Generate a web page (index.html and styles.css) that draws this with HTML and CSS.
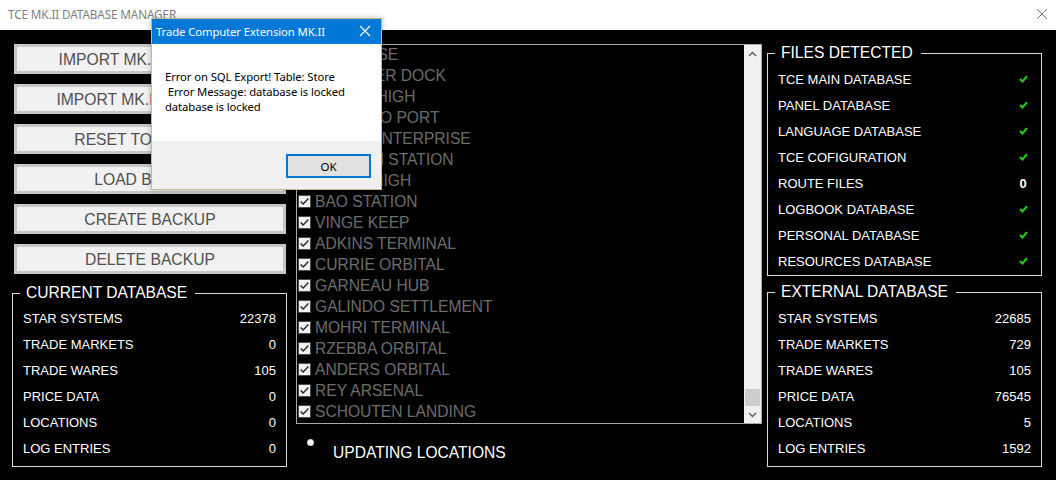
FILE: index.html
```html
<!DOCTYPE html>
<html lang="en">
<head>
<meta charset="utf-8">
<title>TCE MK.II DATABASE MANAGER</title>
<link rel="stylesheet" href="styles.css">
</head>
<body>
<div class="window">
  <header class="titlebar">
    <span class="title">TCE MK.II DATABASE MANAGER</span>
    <svg class="win-close" width="12" height="12" viewBox="0 0 12 12"><path d="M1 1L11 11M11 1L1 11" stroke="#6f6f6f" stroke-width="1" fill="none"/></svg>
  </header>
  <main class="main">
    <section class="col-left">
      <div class="buttons">
        <button class="btn">IMPORT MK.I DATABASE</button>
        <button class="btn">IMPORT MK.II DATABASE</button>
        <button class="btn">RESET TO DEFAULT</button>
        <button class="btn">LOAD BACKUP</button>
        <button class="btn">CREATE BACKUP</button>
        <button class="btn">DELETE BACKUP</button>
      </div>
      <fieldset class="group group-db group-current">
        <legend>CURRENT DATABASE</legend>
        <div class="row"><span>STAR SYSTEMS</span><span>22378</span></div>
        <div class="row"><span>TRADE MARKETS</span><span>0</span></div>
        <div class="row"><span>TRADE WARES</span><span>105</span></div>
        <div class="row"><span>PRICE DATA</span><span>0</span></div>
        <div class="row"><span>LOCATIONS</span><span>0</span></div>
        <div class="row"><span>LOG ENTRIES</span><span>0</span></div>
      </fieldset>
    </section>

    <section class="col-mid">
      <div class="listbox">
        <ul class="list">
          <li><svg class="cb" viewBox="0 0 13 13"><rect x="0.5" y="0.5" width="12" height="12" fill="#f2f2f2" stroke="#4a4a4a"/><path d="M2.6 6.4L5.2 9L10.4 3.6" stroke="#262626" stroke-width="1.4" fill="none"/></svg>KIDD BASE</li>
          <li><svg class="cb" viewBox="0 0 13 13"><rect x="0.5" y="0.5" width="12" height="12" fill="#f2f2f2" stroke="#4a4a4a"/><path d="M2.6 6.4L5.2 9L10.4 3.6" stroke="#262626" stroke-width="1.4" fill="none"/></svg>DRUMMER DOCK</li>
          <li><svg class="cb" viewBox="0 0 13 13"><rect x="0.5" y="0.5" width="12" height="12" fill="#f2f2f2" stroke="#4a4a4a"/><path d="M2.6 6.4L5.2 9L10.4 3.6" stroke="#262626" stroke-width="1.4" fill="none"/></svg>MASON HIGH</li>
          <li><svg class="cb" viewBox="0 0 13 13"><rect x="0.5" y="0.5" width="12" height="12" fill="#f2f2f2" stroke="#4a4a4a"/><path d="M2.6 6.4L5.2 9L10.4 3.6" stroke="#262626" stroke-width="1.4" fill="none"/></svg>ORLANDO PORT</li>
          <li><svg class="cb" viewBox="0 0 13 13"><rect x="0.5" y="0.5" width="12" height="12" fill="#f2f2f2" stroke="#4a4a4a"/><path d="M2.6 6.4L5.2 9L10.4 3.6" stroke="#262626" stroke-width="1.4" fill="none"/></svg>BRAVE ENTERPRISE</li>
          <li><svg class="cb" viewBox="0 0 13 13"><rect x="0.5" y="0.5" width="12" height="12" fill="#f2f2f2" stroke="#4a4a4a"/><path d="M2.6 6.4L5.2 9L10.4 3.6" stroke="#262626" stroke-width="1.4" fill="none"/></svg>NEWTON STATION</li>
          <li><svg class="cb" viewBox="0 0 13 13"><rect x="0.5" y="0.5" width="12" height="12" fill="#f2f2f2" stroke="#4a4a4a"/><path d="M2.6 6.4L5.2 9L10.4 3.6" stroke="#262626" stroke-width="1.4" fill="none"/></svg>DOYLE HIGH</li>
          <li><svg class="cb" viewBox="0 0 13 13"><rect x="0.5" y="0.5" width="12" height="12" fill="#f2f2f2" stroke="#4a4a4a"/><path d="M2.6 6.4L5.2 9L10.4 3.6" stroke="#262626" stroke-width="1.4" fill="none"/></svg>BAO STATION</li>
          <li><svg class="cb" viewBox="0 0 13 13"><rect x="0.5" y="0.5" width="12" height="12" fill="#f2f2f2" stroke="#4a4a4a"/><path d="M2.6 6.4L5.2 9L10.4 3.6" stroke="#262626" stroke-width="1.4" fill="none"/></svg>VINGE KEEP</li>
          <li><svg class="cb" viewBox="0 0 13 13"><rect x="0.5" y="0.5" width="12" height="12" fill="#f2f2f2" stroke="#4a4a4a"/><path d="M2.6 6.4L5.2 9L10.4 3.6" stroke="#262626" stroke-width="1.4" fill="none"/></svg>ADKINS TERMINAL</li>
          <li><svg class="cb" viewBox="0 0 13 13"><rect x="0.5" y="0.5" width="12" height="12" fill="#f2f2f2" stroke="#4a4a4a"/><path d="M2.6 6.4L5.2 9L10.4 3.6" stroke="#262626" stroke-width="1.4" fill="none"/></svg>CURRIE ORBITAL</li>
          <li><svg class="cb" viewBox="0 0 13 13"><rect x="0.5" y="0.5" width="12" height="12" fill="#f2f2f2" stroke="#4a4a4a"/><path d="M2.6 6.4L5.2 9L10.4 3.6" stroke="#262626" stroke-width="1.4" fill="none"/></svg>GARNEAU HUB</li>
          <li><svg class="cb" viewBox="0 0 13 13"><rect x="0.5" y="0.5" width="12" height="12" fill="#f2f2f2" stroke="#4a4a4a"/><path d="M2.6 6.4L5.2 9L10.4 3.6" stroke="#262626" stroke-width="1.4" fill="none"/></svg>GALINDO SETTLEMENT</li>
          <li><svg class="cb" viewBox="0 0 13 13"><rect x="0.5" y="0.5" width="12" height="12" fill="#f2f2f2" stroke="#4a4a4a"/><path d="M2.6 6.4L5.2 9L10.4 3.6" stroke="#262626" stroke-width="1.4" fill="none"/></svg>MOHRI TERMINAL</li>
          <li><svg class="cb" viewBox="0 0 13 13"><rect x="0.5" y="0.5" width="12" height="12" fill="#f2f2f2" stroke="#4a4a4a"/><path d="M2.6 6.4L5.2 9L10.4 3.6" stroke="#262626" stroke-width="1.4" fill="none"/></svg>RZEBBA ORBITAL</li>
          <li><svg class="cb" viewBox="0 0 13 13"><rect x="0.5" y="0.5" width="12" height="12" fill="#f2f2f2" stroke="#4a4a4a"/><path d="M2.6 6.4L5.2 9L10.4 3.6" stroke="#262626" stroke-width="1.4" fill="none"/></svg>ANDERS ORBITAL</li>
          <li><svg class="cb" viewBox="0 0 13 13"><rect x="0.5" y="0.5" width="12" height="12" fill="#f2f2f2" stroke="#4a4a4a"/><path d="M2.6 6.4L5.2 9L10.4 3.6" stroke="#262626" stroke-width="1.4" fill="none"/></svg>REY ARSENAL</li>
          <li><svg class="cb" viewBox="0 0 13 13"><rect x="0.5" y="0.5" width="12" height="12" fill="#f2f2f2" stroke="#4a4a4a"/><path d="M2.6 6.4L5.2 9L10.4 3.6" stroke="#262626" stroke-width="1.4" fill="none"/></svg>SCHOUTEN LANDING</li>
        </ul>
        <div class="scrollbar">
          <div class="sb-arrow"><svg width="9" height="6" viewBox="0 0 9 6"><path d="M1 5L4.5 1.5L8 5" stroke="#606060" stroke-width="1.5" fill="none"/></svg></div>
          <div class="sb-track"><div class="sb-thumb"></div></div>
          <div class="sb-arrow"><svg width="9" height="6" viewBox="0 0 9 6"><path d="M1 1L4.5 4.5L8 1" stroke="#606060" stroke-width="1.5" fill="none"/></svg></div>
        </div>
      </div>
      <div class="status">
        <span class="dot"></span>
        <span class="status-text">UPDATING LOCATIONS</span>
      </div>
    </section>

    <section class="col-right">
      <fieldset class="group group-files">
        <legend>FILES DETECTED</legend>
        <div class="row"><span>TCE MAIN DATABASE</span><span class="mark"><svg width="9" height="8" viewBox="0 0 9 8"><path d="M1 4L3.5 6.5L8 1.2" stroke="#1fd01f" stroke-width="2" fill="none"/></svg></span></div>
        <div class="row"><span>PANEL DATABASE</span><span class="mark"><svg width="9" height="8" viewBox="0 0 9 8"><path d="M1 4L3.5 6.5L8 1.2" stroke="#1fd01f" stroke-width="2" fill="none"/></svg></span></div>
        <div class="row"><span>LANGUAGE DATABASE</span><span class="mark"><svg width="9" height="8" viewBox="0 0 9 8"><path d="M1 4L3.5 6.5L8 1.2" stroke="#1fd01f" stroke-width="2" fill="none"/></svg></span></div>
        <div class="row"><span>TCE COFIGURATION</span><span class="mark"><svg width="9" height="8" viewBox="0 0 9 8"><path d="M1 4L3.5 6.5L8 1.2" stroke="#1fd01f" stroke-width="2" fill="none"/></svg></span></div>
        <div class="row"><span>ROUTE FILES</span><span class="mark mark-num">0</span></div>
        <div class="row"><span>LOGBOOK DATABASE</span><span class="mark"><svg width="9" height="8" viewBox="0 0 9 8"><path d="M1 4L3.5 6.5L8 1.2" stroke="#1fd01f" stroke-width="2" fill="none"/></svg></span></div>
        <div class="row"><span>PERSONAL DATABASE</span><span class="mark"><svg width="9" height="8" viewBox="0 0 9 8"><path d="M1 4L3.5 6.5L8 1.2" stroke="#1fd01f" stroke-width="2" fill="none"/></svg></span></div>
        <div class="row"><span>RESOURCES DATABASE</span><span class="mark"><svg width="9" height="8" viewBox="0 0 9 8"><path d="M1 4L3.5 6.5L8 1.2" stroke="#1fd01f" stroke-width="2" fill="none"/></svg></span></div>
      </fieldset>
      <fieldset class="group group-db group-external">
        <legend>EXTERNAL DATABASE</legend>
        <div class="row"><span>STAR SYSTEMS</span><span>22685</span></div>
        <div class="row"><span>TRADE MARKETS</span><span>729</span></div>
        <div class="row"><span>TRADE WARES</span><span>105</span></div>
        <div class="row"><span>PRICE DATA</span><span>76545</span></div>
        <div class="row"><span>LOCATIONS</span><span>5</span></div>
        <div class="row"><span>LOG ENTRIES</span><span>1592</span></div>
      </fieldset>
    </section>
  </main>

  <div class="dialog">
    <div class="dlg-title">
      <span>Trade Computer Extension MK.II</span>
      <svg class="dlg-close" width="12" height="12" viewBox="0 0 12 12"><path d="M1 1L11 11M11 1L1 11" stroke="#ffffff" stroke-width="1.1" fill="none"/></svg>
    </div>
    <div class="dlg-body">
      <p>Error on SQL Export! Table: Store</p>
      <p>&nbsp;Error Message: database is locked</p>
      <p>database is locked</p>
    </div>
    <div class="dlg-footer">
      <button class="dlg-ok">OK</button>
    </div>
  </div>
</div>
</body>
</html>
```

FILE: styles.css
```css
* { box-sizing: border-box; }

html, body {
  margin: 0;
  padding: 0;
  background: #000;
}

.window {
  position: relative;
  width: 1056px;
  height: 480px;
  overflow: hidden;
  background: #000;
  font-family: "Liberation Sans", Arial, sans-serif;
}

/* ---------- title bar ---------- */
.titlebar {
  height: 30px;
  background: #fff;
  display: flex;
  align-items: center;
  justify-content: space-between;
  padding: 0 7px 2px 8px;
}
.title {
  font-family: "Noto Sans", "Open Sans", sans-serif;
  font-size: 11.7px;
  color: #808080;
  letter-spacing: -0.1px;
}
.win-close { display: block; margin-right: 1px; }

/* ---------- main layout ---------- */
.main {
  display: flex;
  align-items: flex-start;
  padding: 14px 0 0 12px;
}
.col-left {
  width: 275px;
  display: flex;
  flex-direction: column;
}
.col-mid {
  width: 466px;
  margin: 0 5px 0 9px;
  display: flex;
  flex-direction: column;
}
.col-right {
  width: 275px;
  display: flex;
  flex-direction: column;
}

/* ---------- buttons ---------- */
.buttons {
  display: flex;
  flex-direction: column;
  gap: 10px;
  padding-left: 2px;
}
.btn {
  width: 272px;
  height: 30px;
  margin: 0;
  padding: 1px 0 0 0;
  background: #f1f1f1;
  border: 3px solid #c6c6c6;
  font-family: "Liberation Sans", Arial, sans-serif;
  font-size: 15.7px;
  color: #505050;
  text-align: center;
  white-space: nowrap;
  overflow: hidden;
}

/* ---------- group boxes ---------- */
.group {
  margin: 0;
  border: 1px solid #dadada;
  padding: 3px 10px 5px 10px;
  min-width: 0;
  color: #fff;
}
.group legend {
  font-size: 15.6px;
  line-height: 18px;
  padding: 0 8px 0 6px;
  margin-left: -3px;
  color: #fff;
}
.row {
  height: 26px;
  display: flex;
  align-items: center;
  justify-content: space-between;
  font-size: 13px;
  color: #fff;
}
.group-current { margin-top: 10px; }
.group-files { padding: 4px 10px 1px 10px; }
.group-external { margin-top: 7px; padding-top: 4px; }

.mark {
  width: 16px;
  display: flex;
  justify-content: center;
  align-items: center;
}
.mark svg { display: block; }
.mark-num { font-weight: bold; }

/* ---------- list box ---------- */
.listbox {
  height: 380px;
  border: 1px solid #a9a9a9;
  display: flex;
  background: #000;
}
.list {
  flex: 1;
  list-style: none;
  margin: -1px 0 0 0;
  padding: 0 0 0 1px;
  overflow: hidden;
}
.list li {
  height: 21px;
  display: flex;
  align-items: center;
  gap: 4px;
  font-size: 15.6px;
  color: #6c6c6c;
  white-space: nowrap;
}
.cb {
  width: 13px;
  height: 13px;
  flex: none;
  display: block;
}

.scrollbar {
  width: 17px;
  background: #f0f0f0;
  display: flex;
  flex-direction: column;
}
.sb-arrow {
  height: 17px;
  display: flex;
  align-items: center;
  justify-content: center;
}
.sb-arrow svg { display: block; }
.sb-track {
  flex: 1;
  display: flex;
  flex-direction: column;
  justify-content: flex-end;
}
.sb-thumb {
  height: 17px;
  margin: 0 1px;
  background: #cdcdcd;
}

/* ---------- status ---------- */
.status {
  display: flex;
  align-items: flex-start;
  padding: 15px 0 0 11px;
}
.dot {
  width: 7px;
  height: 7px;
  border-radius: 50%;
  background: radial-gradient(circle, #ffffff 0 45%, #bdbdbd 70%, #555 100%);
}
.status-text {
  margin: 5px 0 0 19px;
  font-size: 15.6px;
  line-height: 18px;
  color: #fff;
}

/* ---------- dialog ---------- */
.dialog {
  position: absolute;
  left: 151px;
  top: 18px;
  width: 231px;
  height: 172px;
  border: 1px solid #c9b890;
  background: #fff;
  display: flex;
  flex-direction: column;
  font-family: "Noto Sans", "Open Sans", sans-serif;
  box-shadow: 0 0 6px rgba(0,0,0,0.25);
}
.dlg-title {
  height: 25px;
  background: #0078d7;
  color: #fff;
  display: flex;
  align-items: center;
  justify-content: space-between;
  padding: 0 10px 1px 4px;
  font-size: 11.3px;
  letter-spacing: -0.1px;
}
.dlg-close { display: block; }
.dlg-body {
  height: 97px;
  padding: 25px 0 0 13px;
  background: #fff;
  font-size: 11.3px;
  letter-spacing: -0.1px;
  line-height: 15px;
  color: #000;
}
.dlg-body p { margin: 0; white-space: pre; }
.dlg-footer {
  flex: 1;
  background: #f0f0f0;
  display: flex;
  justify-content: flex-end;
  align-items: flex-start;
  padding: 13px 10px 0 0;
}
.dlg-ok {
  width: 85px;
  height: 24px;
  margin: 0;
  padding: 0;
  border: 2px solid #0078d7;
  background: #e1e1e1;
  font-family: "Noto Sans", "Open Sans", sans-serif;
  font-size: 11.5px;
  color: #000;
}
```
